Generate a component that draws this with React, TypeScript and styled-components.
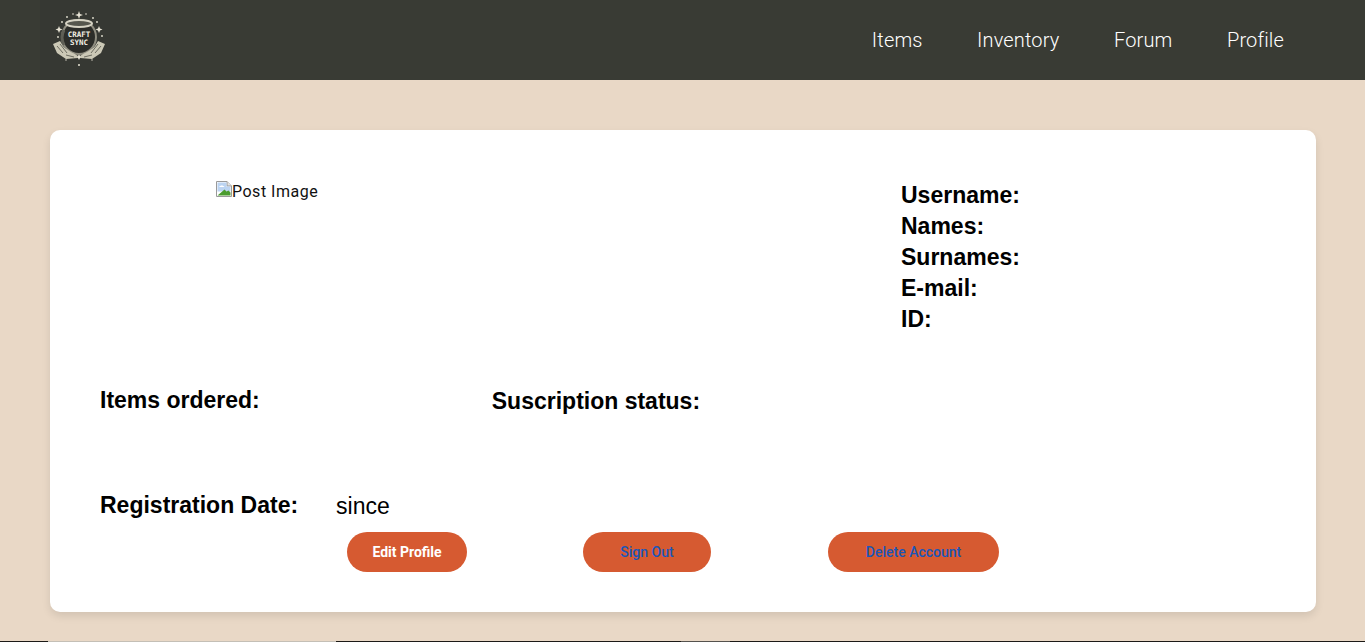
import React from "react";
import styled, { createGlobalStyle } from "styled-components";

const Global = createGlobalStyle`
  html, body { margin: 0; padding: 0; height: 642px; overflow: hidden; background: #e9d8c6; }
  #root { height: 642px; }
  * { box-sizing: border-box; }
`;

const Page = styled.div`
  width: 1365px;
  height: 642px;
  display: flex;
  flex-direction: column;
  background: #e9d8c6;
  font-family: Roboto, sans-serif;
`;

const Header = styled.header`
  height: 80px;
  flex: none;
  display: flex;
  align-items: center;
  justify-content: space-between;
  padding: 0 81px 0 40px;
  background: #393b34;
`;

const LogoBox = styled.div`
  width: 80px;
  height: 80px;
  background: #363833;
`;

const Nav = styled.nav`
  display: flex;
  gap: 54.5px;
`;

const NavLink = styled.a`
  color: #fff;
  font-family: Roboto, sans-serif;
  font-weight: 300;
  font-size: 20px;
  letter-spacing: 0.15px;
  line-height: 24px;
`;

const Main = styled.main`
  flex: 1;
  padding: 50px 49px 29px 50px;
`;

const Card = styled.section`
  height: 482px;
  background: #fff;
  border-radius: 10px;
  box-shadow: 0 4px 8px rgba(0, 0, 0, 0.1);
  padding: 49px 50px 40px;
  display: flex;
  flex-direction: column;
`;

const TopRow = styled.div`
  height: 204px;
  display: flex;
  justify-content: space-between;
`;

const ImageSlot = styled.div`
  margin-left: 116px;
  padding-top: 1px;
  display: flex;
  align-items: flex-start;
  font-size: 16px;
  line-height: 24px;
  letter-spacing: 0.5px;
  color: #111;
`;

const Broken = styled.svg`
  width: 16px;
  height: 16px;
  flex: none;
  margin-top: 1px;
`;

const Details = styled.div`
  width: 365px;
  padding-top: 1px;
  display: flex;
  flex-direction: column;
`;

const Label = styled.div`
  font-family: "Liberation Sans", Arial, sans-serif;
  font-weight: 700;
  font-size: 23px;
  line-height: 31px;
  color: #000;
`;

const StatsRow = styled.div`
  height: 107px;
  display: flex;
  gap: 232px;
  padding-top: 2px;
`;

const Status = styled(Label)`
  margin-top: 1px;
`;

const DateRow = styled.div`
  height: 42px;
  display: flex;
  align-items: flex-start;
  gap: 38px;
`;

const Since = styled.div`
  font-family: "Liberation Sans", Arial, sans-serif;
  font-size: 23px;
  line-height: 31px;
  margin-top: 1px;
  color: #000;
`;

const Actions = styled.div`
  display: flex;
  padding-left: 247px;
`;

const Pill = styled.button<{ $w: number; $gap?: number; $light?: boolean }>`
  width: ${(p) => p.$w}px;
  height: 40px;
  margin-right: ${(p) => p.$gap ?? 0}px;
  border: none;
  border-radius: 20px;
  background: #d65a31;
  color: ${(p) => (p.$light ? "#fff" : "#1a56b8")};
  font-family: Roboto, sans-serif;
  font-size: 14px;
  font-weight: ${(p) => (p.$light ? 700 : 500)};
  padding: 0;
`;

const Strip = styled.div`
  height: 1px;
  flex: none;
  display: flex;
  background: #1c1a17;
`;

const StripPart = styled.div<{ $w: number; $c: string }>`
  width: ${(p) => p.$w}px;
  background: ${(p) => p.$c};
`;

const Logo = () => (
  <svg width="80" height="80" viewBox="0 0 80 80">
    <g fill="#e8e4d6">
      <path d="M39 11l1 3 3 1-3 1-1 3-1-3-3-1 3-1z" />
      <path d="M19 26l1 2.500 2.500 1-2.500 1-1 2.500-1-2.500-2.500-1 2.500-1z" />
      <path d="M59 26l1 2.500 2.500 1-2.500 1-1 2.500-1-2.500-2.500-1 2.500-1z" />
      <path d="M39 54l1 2 2 1-2 1-1 2-1-2-2-1 2-1z" />
      <circle cx="27" cy="17" r="0.900" />
      <circle cx="33" cy="14" r="0.800" />
      <circle cx="46" cy="14" r="0.800" />
      <circle cx="53" cy="18" r="0.900" />
      <circle cx="57" cy="22" r="0.900" />
      <circle cx="22" cy="22" r="0.900" />
      <circle cx="18" cy="37" r="0.900" />
      <circle cx="62" cy="36" r="0.900" />
      <circle cx="39" cy="65" r="1" />
      <circle cx="26" cy="60" r="0.700" />
      <circle cx="52" cy="60" r="0.700" />
    </g>
    <circle cx="39" cy="37" r="17" fill="#2c2d29" stroke="#8f8d80" strokeWidth="2" />
    <path d="M24 30a16 16 0 0 0 0 15" fill="none" stroke="#5e5e55" strokeWidth="3" />
    <ellipse cx="39" cy="23.500" rx="13" ry="3.500" fill="#55564d" stroke="#d6d3c4" strokeWidth="2" />
    <text x="39" y="37" textAnchor="middle" fontFamily="'DejaVu Sans Mono', monospace" fontWeight="700" fontSize="7.500" fill="#f2efe3">CRAFT</text>
    <text x="39" y="45" textAnchor="middle" fontFamily="'DejaVu Sans Mono', monospace" fontWeight="700" fontSize="7.500" fill="#f2efe3">SYNC</text>
    <path d="M13 44l7-3 3 5c3 4 9 6 15 10v2l-12 1-9-6z" fill="#cbc8b6" />
    <path d="M65 44l-7-3-3 5c-3 4-9 6-15 10v2l12 1 9-6z" fill="#cbc8b6" />
    <path d="M17 46l6 7M20 44l7 9M26 55l8 2M61 46l-6 7M58 44l-7 9M52 55l-8 2" stroke="#6d6c61" strokeWidth="1" />
  </svg>
);

const BrokenIcon = () => (
  <Broken viewBox="0 0 16 16">
    <path d="M0.500 0.500h10.500l4.500 4.500v10.500H0.500z" fill="#fff" stroke="#9a9a9a" />
    <path d="M11 0.500v4.500h4.500" fill="#e4e4e4" stroke="#9a9a9a" />
    <path d="M1.500 1.500h9v4h4v5H1.500z" fill="#bcd4f2" />
    <path d="M3 6c1.500-2 4-2 5.500 0z" fill="#fff" />
    <path d="M1.500 14.500l7-6 2 2 2-1 2 2v3z" fill="#4a9c2f" />
  </Broken>
);

export default function App() {
  return (
    <Page>
      <Global />
      <Header>
        <LogoBox>
          <Logo />
        </LogoBox>
        <Nav>
          <NavLink>Items</NavLink>
          <NavLink>Inventory</NavLink>
          <NavLink>Forum</NavLink>
          <NavLink>Profile</NavLink>
        </Nav>
      </Header>
      <Main>
        <Card>
          <TopRow>
            <ImageSlot>
              <BrokenIcon />
              Post Image
            </ImageSlot>
            <Details>
              <Label>Username:</Label>
              <Label>Names:</Label>
              <Label>Surnames:</Label>
              <Label>E-mail:</Label>
              <Label>ID:</Label>
            </Details>
          </TopRow>
          <StatsRow>
            <Label>Items ordered:</Label>
            <Status>Suscription status:</Status>
          </StatsRow>
          <DateRow>
            <Label>Registration Date:</Label>
            <Since>since</Since>
          </DateRow>
          <Actions>
            <Pill $w={120} $gap={116} $light>Edit Profile</Pill>
            <Pill $w={128} $gap={117}>Sign Out</Pill>
            <Pill $w={171}>Delete Account</Pill>
          </Actions>
        </Card>
      </Main>
      <Strip>
        <StripPart $w={48} $c="#1c1a17" />
        <StripPart $w={288} $c="#c4bfb6" />
        <StripPart $w={345} $c="#1c1a17" />
        <StripPart $w={49} $c="#55524e" />
      </Strip>
    </Page>
  );
}
